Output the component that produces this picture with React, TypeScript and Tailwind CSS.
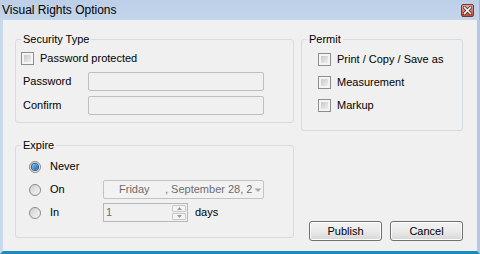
import React from 'react';

const font = { fontFamily: '"Liberation Sans", Arial, sans-serif' };

const Checkbox = () => (
  <span className="w-[13px] h-[13px] shrink-0 border border-[#8f8f8f] bg-[#f4f4f4] p-[2px] flex">
    <span className="flex-1 bg-gradient-to-br from-[#c9c9c9] to-[#efefef]" />
  </span>
);

const Radio = ({ checked = false }: { checked?: boolean }) => (
  <span className="w-[12px] h-[12px] shrink-0 rounded-full border border-[#8a8a8a] bg-gradient-to-br from-[#d0d0d0] to-[#f7f7f7] flex items-center justify-center">
    {checked && (
      <span className="w-[6px] h-[6px] rounded-full bg-gradient-to-br from-[#7fc0f0] to-[#1b5fa8] ring-1 ring-[#2a5d8f]" />
    )}
  </span>
);

const Button = ({ label }: { label: string }) => (
  <button className="w-[73px] h-[20px] border border-[#707070] rounded-[3px] bg-gradient-to-b from-[#f2f2f2] via-[#ebebeb] to-[#d6d6d6] shadow-[inset_0_0_0_1px_#fcfcfc] text-[11px] text-black flex items-center justify-center">
    {label}
  </button>
);

const Legend = ({ text }: { text: string }) => (
  <legend className="ml-[5px] px-[2px] text-[11px] leading-[14px] text-black">{text}</legend>
);

export default function App() {
  return (
    <div className="w-[480px] h-[254px] flex flex-col bg-[#f0f0f0] overflow-hidden" style={font}>
      {/* title bar */}
      <div className="h-[20px] flex items-center justify-between bg-gradient-to-b from-[#bccfe7] to-[#c4d6ec] pl-[2px] pr-[5px] border-r-[1px] border-r-[#9fb4cf]">
        <span className="text-[12px] text-black leading-none">Visual Rights Options</span>
        <span className="w-[13px] h-[13px] rounded-[2px] border border-[#6b3b34] bg-gradient-to-b from-[#e3a699] to-[#c04a38] flex items-center justify-center">
          <svg width="9" height="9" viewBox="0 0 9 9">
            <path d="M1.5 1.5 L7.5 7.5 M7.5 1.5 L1.5 7.5" stroke="#3b1a14" strokeWidth="3" strokeLinecap="square" />
            <path d="M1.5 1.5 L7.5 7.5 M7.5 1.5 L1.5 7.5" stroke="#ffffff" strokeWidth="1.6" strokeLinecap="square" />
          </svg>
        </span>
      </div>

      {/* body */}
      <div className="flex-1 flex gap-[7px] pl-[12px] pt-[12px] border-l-[3px] border-l-[#c9d8ea] border-r-[3px] border-r-[#b3c8e2] border-b-[3px] border-b-[#1f88c0] pb-[10px]">
        {/* left column */}
        <div className="w-[279px] flex flex-col gap-[15px]">
          <fieldset className="h-[91px] border border-[#d5dbe0] rounded-[3px]">
            <Legend text="Security Type" />
            <div className="flex items-center gap-[6px] pl-[5px] mt-[6px] text-[11px] leading-[13px]">
              <Checkbox />
              <span>Password protected</span>
            </div>
            <div className="flex flex-col gap-[5px] mt-[7px] text-[11px]">
              <div className="flex items-center pl-[7px]">
                <span className="w-[65px]">Password</span>
                <span className="w-[176px] h-[19px] border border-[#bfbfbf] rounded-[2px] bg-[#f0f0f0]" />
              </div>
              <div className="flex items-center pl-[7px]">
                <span className="w-[65px]">Confirm</span>
                <span className="w-[176px] h-[19px] border border-[#bfbfbf] rounded-[2px] bg-[#f0f0f0]" />
              </div>
            </div>
          </fieldset>

          <fieldset className="h-[100px] border border-[#d5dbe0] rounded-[3px]">
            <Legend text="Expire" />
            <div className="flex flex-col gap-[4px] mt-[5px] text-[11px]">
              <div className="h-[19px] flex items-center pl-[13px]">
                <Radio checked />
                <span className="ml-[9px]">Never</span>
              </div>
              <div className="h-[19px] flex items-center pl-[13px]">
                <Radio />
                <span className="ml-[9px] w-[53px]">On</span>
                <div className="w-[161px] h-[19px] border border-[#c3c3c3] rounded-[2px] bg-[#f2f2f2] flex items-center text-[#6d6d6d]">
                  <div className="flex-1 whitespace-nowrap pl-[15px] flex">
                    <span className="w-[46px] shrink-0">Friday</span>
                    <span>, September 28, 2</span>
                  </div>
                  <svg width="12" height="6" viewBox="0 0 12 6" className="shrink-0 mr-[1px]">
                    <path d="M2.5 1.5 L9.5 1.5 L6 5 Z" fill="#a8a8a8" />
                  </svg>
                </div>
              </div>
              <div className="h-[19px] flex items-center pl-[13px]">
                <Radio />
                <span className="ml-[9px] w-[53px]">In</span>
                <div className="w-[85px] h-[19px] border border-[#b8b8b8] bg-[#f0f0f0] flex items-center text-[#6d6d6d]">
                  <span className="flex-1 pl-[2px]">1</span>
                  <div className="w-[16px] h-full flex flex-col gap-[1px] p-[1px]">
                    <span className="flex-1 border border-[#c8c8c8] rounded-[1px] bg-[#f4f4f4] flex items-center justify-center">
                      <svg width="5" height="3" viewBox="0 0 5 3"><path d="M0 3 L5 3 L2.5 0 Z" fill="#9a9a9a" /></svg>
                    </span>
                    <span className="flex-1 border border-[#c8c8c8] rounded-[1px] bg-[#f4f4f4] flex items-center justify-center">
                      <svg width="5" height="3" viewBox="0 0 5 3"><path d="M0 0 L5 0 L2.5 3 Z" fill="#9a9a9a" /></svg>
                    </span>
                  </div>
                </div>
                <span className="ml-[7px]">days</span>
              </div>
            </div>
          </fieldset>
        </div>

        {/* right column */}
        <div className="w-[162px] flex flex-col justify-between">
          <fieldset className="h-[99px] border border-[#d5dbe0] rounded-[3px]">
            <Legend text="Permit" />
            <div className="flex flex-col gap-[10px] mt-[7px] pl-[16px] text-[11px] leading-[13px]">
              <div className="flex items-center gap-[6px]">
                <Checkbox />
                <span>Print / Copy / Save as</span>
              </div>
              <div className="flex items-center gap-[6px]">
                <Checkbox />
                <span>Measurement</span>
              </div>
              <div className="flex items-center gap-[6px]">
                <Checkbox />
                <span>Markup</span>
              </div>
            </div>
          </fieldset>
          <div className="flex justify-end gap-[8px]">
            <Button label="Publish" />
            <Button label="Cancel" />
          </div>
        </div>
      </div>
    </div>
  );
}
